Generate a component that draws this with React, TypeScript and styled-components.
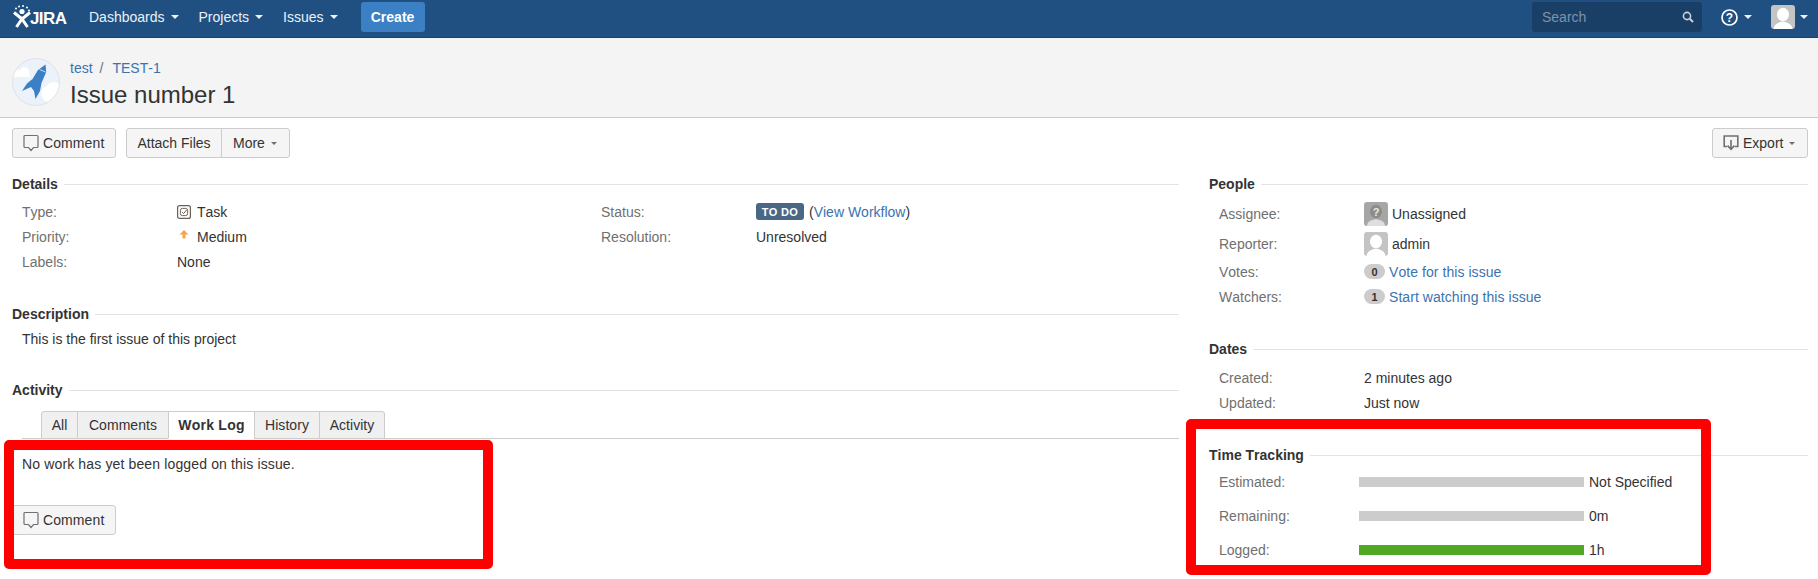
import React from "react";
import styled, { createGlobalStyle } from "styled-components";

const GlobalStyle = createGlobalStyle`
  html, body {
    margin: 0;
    height: 100%;
    overflow: hidden;
    background: #fff;
    font-family: "Liberation Sans", Arial, sans-serif;
    font-size: 14px;
    font-kerning: none;
    color: #333;
  }
  * { box-sizing: border-box; }
`;

const Page = styled.div`
  position: relative;
  width: 1818px;
  height: 579px;
  overflow: hidden;
`;

const Nav = styled.header`
  height: 38px;
  background: #205081;
  border-bottom: 1px solid #2e3d54;
  display: flex;
  align-items: center;
  padding: 0 10px 3px 13px;
  color: #fff;
`;

const LogoWrap = styled.div`
  display: flex;
  align-items: center;
  width: 76px;
`;

const LogoText = styled.span`
  font-size: 17px;
  font-weight: 700;
  letter-spacing: -0.6px;
  margin-left: -1px;
  padding-top: 3px;
`;

const NavItem = styled.a`
  display: flex;
  align-items: center;
  color: #ebf2f9;
  margin-right: 20px;
`;

const Caret = styled.i<{ $light?: boolean }>`
  display: inline-block;
  width: 0;
  height: 0;
  margin-left: 6px;
  border-left: 4px solid transparent;
  border-right: 4px solid transparent;
  border-top: 4px solid ${(p) => (p.$light ? "#ebf2f9" : "#707070")};
`;

const SmallCaret = styled(Caret)`
  border-left-width: 3px;
  border-right-width: 3px;
  border-top-width: 3px;
`;

const AvatarCaret = styled(Caret)`
  margin-left: 5px;
`;

const CreateButton = styled.a`
  width: 64px;
  height: 30px;
  margin-left: 3px;
  display: flex;
  align-items: center;
  justify-content: center;
  background: #3b7fc4;
  border-radius: 3px;
  color: #fff;
  font-weight: 700;
`;

const NavRight = styled.div`
  margin-left: auto;
  display: flex;
  align-items: center;
`;

const SearchBox = styled.div`
  width: 170px;
  height: 30px;
  margin-right: 19px;
  padding: 0 8px 0 10px;
  display: flex;
  align-items: center;
  justify-content: space-between;
  background: #1a3f66;
  border-radius: 3px;
  color: #7d93ab;
`;

const HelpWrap = styled.div`
  display: flex;
  align-items: center;
  width: 50px;
`;

const NavAvatar = styled.div`
  width: 24px;
  height: 24px;
  border-radius: 3px;
  overflow: hidden;
`;

const IssueHeader = styled.section`
  height: 80px;
  background: #f4f4f4;
  border-bottom: 1px solid #ccc;
  display: flex;
  padding: 20px 12px 0;
`;

const ProjectAvatar = styled.div`
  width: 48px;
  height: 48px;
  margin-right: 10px;
`;

const Crumbs = styled.div`
  display: flex;
  line-height: 20px;
  color: #707070;
`;

const Link = styled.a`
  color: #3b73af;
`;

const CrumbSep = styled.span`
  margin: 0 9px 0 7px;
`;

const Title = styled.h1`
  margin: 3px 0 0;
  font-size: 24px;
  font-weight: 400;
  line-height: 28px;
  color: #333;
`;

const Toolbar = styled.div`
  display: flex;
  justify-content: space-between;
  padding: 10px 10px 0 12px;
`;

const ToolGroup = styled.div`
  display: flex;
  gap: 10px;
`;

const JoinedGroup = styled.div`
  display: flex;
`;

const Button = styled.a`
  height: 30px;
  display: inline-flex;
  align-items: center;
  padding: 0 10px;
  gap: 4px;
  background: #f5f5f5;
  border: 1px solid #ccc;
  border-radius: 3.01px;
  color: #333;
`;

const CommentBtn = styled(Button)`
  width: 104px;
  letter-spacing: 0.1px;
`;

const JoinedLeft = styled(Button)`
  width: 96px;
  justify-content: center;
  border-radius: 3px 0 0 3px;
`;

const JoinedRight = styled(Button)`
  width: 69px;
  gap: 0;
  margin-left: -1px;
  padding-left: 11px;
  border-radius: 0 3px 3px 0;
`;

const ExportBtn = styled(Button)`
  width: 96px;
  gap: 4px;
  ${SmallCaret} {
    margin-left: 2px;
  }
`;

const Columns = styled.div`
  display: flex;
  padding: 0 10px 0 12px;
  gap: 30px;
`;

const MainCol = styled.main`
  width: 1167px;
`;

const SideCol = styled.aside`
  flex: 1;
`;

const Heading = styled.h4<{ $top: number }>`
  display: flex;
  align-items: center;
  gap: 6px;
  margin: ${(p) => p.$top}px 0 0;
  height: 20px;
  font-size: 14px;
  font-weight: 700;
  color: #333;
  &::after {
    content: "";
    flex: 1;
    height: 1px;
    background: #e3e3e3;
  }
`;

const DetailsGrid = styled.div`
  display: grid;
  grid-template-columns: 579px 1fr;
  padding-top: 5px;
`;

const Row = styled.div<{ $h?: number; $labelW?: number }>`
  display: grid;
  grid-template-columns: ${(p) => p.$labelW ?? 155}px 1fr;
  height: ${(p) => p.$h ?? 25}px;
  padding-left: 10px;
  align-items: center;
`;

const RowStack = styled.div<{ $top: number }>`
  padding-top: ${(p) => p.$top}px;
`;

const Label = styled.span`
  color: #707070;
`;

const Value = styled.span`
  display: flex;
  align-items: center;
  color: #333;
`;

const Lozenge = styled.span`
  width: 48px;
  height: 17px;
  margin-right: 5px;
  display: inline-flex;
  align-items: center;
  justify-content: center;
  background: #4a6785;
  border-radius: 3px;
  color: #fff;
  font-size: 11px;
  font-weight: 700;
  letter-spacing: 0.3px;
`;

const IconSlot = styled.span`
  display: inline-flex;
  width: 20px;
`;

const DescText = styled.p`
  margin: 5px 0 0 10px;
  line-height: 20px;
`;

const Tabs = styled.nav`
  display: flex;
  margin: 11px 0 0 10px;
  padding-left: 19px;
  height: 28px;
  border-bottom: 1px solid #ccc;
`;

const Tab = styled.a<{ $active?: boolean; $w: number }>`
  width: ${(p) => p.$w}px;
  height: 28px;
  display: flex;
  align-items: center;
  justify-content: center;
  background: ${(p) => (p.$active ? "#fff" : "#f0f0f0")};
  border: 1px solid #ccc;
  border-bottom: ${(p) => (p.$active ? "1px solid #fff" : "1px solid #ccc")};
  margin-left: -1px;
  font-weight: ${(p) => (p.$active ? 700 : 400)};
  letter-spacing: ${(p) => (p.$active ? "0.25px" : "0.05px")};
  color: #333;
  &:first-child {
    margin-left: 0;
    border-radius: 3px 0 0 0;
  }
  &:last-child {
    border-radius: 0 3px 0 0;
  }
`;

const EmptyLog = styled.p`
  margin: 15px 0 0 10px;
  line-height: 20px;
  letter-spacing: 0.14px;
`;

const FooterActions = styled.div`
  margin-top: 31px;
`;

const Avatar = styled.span`
  width: 24px;
  height: 24px;
  margin-right: 4px;
  border-radius: 3px;
  overflow: hidden;
  display: inline-flex;
`;

const Badge = styled.span`
  min-width: 21px;
  height: 15px;
  margin-right: 4px;
  display: inline-flex;
  align-items: center;
  justify-content: center;
  background: #ccc;
  border-radius: 8px;
  color: #333;
  font-size: 11px;
  font-weight: 700;
`;

const WatchLink = styled(Link)`
  letter-spacing: 0.06px;
`;

const TrackRow = styled.div`
  display: grid;
  grid-template-columns: 140px 225px 1fr;
  align-items: center;
  height: 34px;
  padding-left: 10px;
`;

const Bar = styled.div<{ $color: string }>`
  height: 10px;
  background: ${(p) => p.$color};
`;

const TrackValue = styled.span`
  padding-left: 5px;
  color: #333;
`;

const Annotation = styled.div<{ $l: number; $t: number; $w: number; $h: number }>`
  position: absolute;
  left: ${(p) => p.$l}px;
  top: ${(p) => p.$t}px;
  width: ${(p) => p.$w}px;
  height: ${(p) => p.$h}px;
  border: 10px solid #f00;
  border-radius: 5px;
  pointer-events: none;
`;

const CommentIcon = () => (
  <svg width="16" height="18" viewBox="0 0 16 18" fill="none">
    <path
      d="M2 1.5h12a1 1 0 0 1 1 1v10a1 1 0 0 1-1 1h-3.5L8 16.5 5.5 13.5H2a1 1 0 0 1-1-1v-10a1 1 0 0 1 1-1z"
      stroke="#707070"
      strokeWidth="1.2"
    />
  </svg>
);

const ExportIcon = () => (
  <svg width="16" height="18" viewBox="0 0 16 18" fill="none">
    <path d="M4 12.5H1.2V2h13.6v10.5H12" stroke="#707070" strokeWidth="1.6" />
    <path d="M8 6v9M4.6 11.6 8 15.4l3.4-3.8" stroke="#707070" strokeWidth="1.6" />
  </svg>
);

const PersonAvatar = ({ unknown }: { unknown?: boolean }) => (
  <svg width="24" height="24" viewBox="0 0 24 24">
    <rect width="24" height="24" fill={unknown ? "#a6a6a6" : "#c4c4c4"} />
    <ellipse cx="12" cy="9.5" rx="6" ry="6.8" fill={unknown ? "#8c8c8c" : "#fff"} />
    <path
      d={unknown ? "M3 24c0-4.5 4-6 9-7 5 1 9 2.5 9 7z" : "M2.5 24c.5-4.5 4-6.5 9.5-7.5 5.5 1 9 3 9.5 7.5z"}
      fill={unknown ? "#dedede" : "#fff"}
    />
    {unknown && (
      <text x="12" y="13.5" textAnchor="middle" fontSize="11" fontWeight="700" fill="#e8e8e8" fontFamily="Liberation Sans">
        ?
      </text>
    )}
  </svg>
);

export default function App() {
  return (
    <Page>
      <GlobalStyle />
      <Nav>
        <LogoWrap>
          <svg width="18" height="24" viewBox="0 0 18 24">
            <circle cx="9" cy="6.5" r="2.6" fill="#fff" />
            <g fill="#fff">
              <circle cx="3" cy="3.5" r="1" />
              <circle cx="6" cy="1.5" r="1" />
              <circle cx="10" cy="1" r="1" />
              <circle cx="14" cy="2.5" r="1" />
              <circle cx="16" cy="5.5" r="1" />
            </g>
            <path d="M1 7.5 9 14l8-6.5M3.5 22 9 14l5.5 8" stroke="#fff" strokeWidth="3" fill="none" />
          </svg>
          <LogoText>JIRA</LogoText>
        </LogoWrap>
        <NavItem>Dashboards<Caret $light /></NavItem>
        <NavItem>Projects<Caret $light /></NavItem>
        <NavItem>Issues<Caret $light /></NavItem>
        <CreateButton>Create</CreateButton>
        <NavRight>
          <SearchBox>
            Search
            <svg width="12" height="12" viewBox="0 0 12 12" fill="none">
              <circle cx="5" cy="5" r="3.6" stroke="#c4d0dc" strokeWidth="1.6" />
              <path d="M7.8 7.8 11 11" stroke="#c4d0dc" strokeWidth="2" />
            </svg>
          </SearchBox>
          <HelpWrap>
            <svg width="17" height="17" viewBox="0 0 17 17" fill="none">
              <circle cx="8.5" cy="8.5" r="7.5" stroke="#fff" strokeWidth="1.7" />
              <text x="8.5" y="13" textAnchor="middle" fontSize="12" fontWeight="700" fill="#fff" fontFamily="Liberation Sans">
                ?
              </text>
            </svg>
            <Caret $light />
          </HelpWrap>
          <NavAvatar><PersonAvatar /></NavAvatar>
          <AvatarCaret $light />
        </NavRight>
      </Nav>

      <IssueHeader>
        <ProjectAvatar>
          <svg width="48" height="48" viewBox="0 0 48 48">
            <defs>
              <clipPath id="avatarClip">
                <circle cx="24" cy="24" r="23" />
              </clipPath>
            </defs>
            <circle cx="24" cy="24" r="23.5" fill="#ebf2f9" stroke="#dde3ea" />
            <g clipPath="url(#avatarClip)" fill="#fff">
              <path d="M0 19c1-6 5-9 8-7 2-4 7-4 9 0l1 7z" />
              <path d="M30 38c-2-5 1-9 4-9 2-5 9-6 14-3v18H36c-3 0-5-3-6-6z" />
            </g>
            <path
              d="M33.5 6.5 34.2 14 29.5 25 28 33 23.5 41 22 33 19 29 10 33 15 25.5 20.5 21 26 12z"
              fill="#3b7fc4"
            />
            <path d="M27.5 11.5 33.5 14" stroke="#ebf2f9" strokeWidth="0.8" />
          </svg>
        </ProjectAvatar>
        <div>
          <Crumbs>
            <Link>test</Link>
            <CrumbSep>/</CrumbSep>
            <Link>TEST-1</Link>
          </Crumbs>
          <Title>Issue number 1</Title>
        </div>
      </IssueHeader>

      <Toolbar>
        <ToolGroup>
          <CommentBtn><CommentIcon />Comment</CommentBtn>
          <JoinedGroup>
            <JoinedLeft>Attach Files</JoinedLeft>
            <JoinedRight>More<SmallCaret /></JoinedRight>
          </JoinedGroup>
        </ToolGroup>
        <ExportBtn><ExportIcon />Export<SmallCaret /></ExportBtn>
      </Toolbar>

      <Columns>
        <MainCol>
          <Heading $top={16}>Details</Heading>
          <DetailsGrid>
            <div>
              <Row>
                <Label>Type:</Label>
                <Value>
                  <IconSlot>
                    <svg width="14" height="14" viewBox="0 0 14 14" fill="none">
                      <rect x="0.6" y="0.6" width="12.8" height="12.8" rx="2" stroke="#6b6257" strokeWidth="1.2" />
                      <rect x="3.4" y="3.4" width="7.2" height="7.2" rx="2" stroke="#6b6257" />
                      <path d="m5 7 1.6 1.6L9.6 5" stroke="#6b6257" />
                    </svg>
                  </IconSlot>
                  Task
                </Value>
              </Row>
              <Row>
                <Label>Priority:</Label>
                <Value>
                  <IconSlot>
                    <svg width="14" height="14" viewBox="0 0 14 14">
                      <path d="M7 0 11.5 4.5H8.5V8.5H5.5V4.5H2.5z" fill="#f79232" opacity="0.85" />
                    </svg>
                  </IconSlot>
                  Medium
                </Value>
              </Row>
              <Row>
                <Label>Labels:</Label>
                <Value>None</Value>
              </Row>
            </div>
            <div>
              <Row>
                <Label>Status:</Label>
                <Value>
                  <Lozenge>TO DO</Lozenge>
                  <span>(<Link>View Workflow</Link>)</span>
                </Value>
              </Row>
              <Row>
                <Label>Resolution:</Label>
                <Value>Unresolved</Value>
              </Row>
            </div>
          </DetailsGrid>

          <Heading $top={30}>Description</Heading>
          <DescText>This is the first issue of this project</DescText>

          <Heading $top={31}>Activity</Heading>
          <Tabs>
            <Tab $w={37}>All</Tab>
            <Tab $w={92}>Comments</Tab>
            <Tab $w={87} $active>Work Log</Tab>
            <Tab $w={66}>History</Tab>
            <Tab $w={66}>Activity</Tab>
          </Tabs>
          <EmptyLog>No work has yet been logged on this issue.</EmptyLog>
          <FooterActions>
            <CommentBtn><CommentIcon />Comment</CommentBtn>
          </FooterActions>
        </MainCol>

        <SideCol>
          <Heading $top={16}>People</Heading>
          <RowStack $top={5}>
            <Row $h={30} $labelW={145}>
              <Label>Assignee:</Label>
              <Value><Avatar><PersonAvatar unknown /></Avatar>Unassigned</Value>
            </Row>
            <Row $h={30} $labelW={145}>
              <Label>Reporter:</Label>
              <Value><Avatar><PersonAvatar /></Avatar>admin</Value>
            </Row>
            <Row $labelW={145}>
              <Label>Votes:</Label>
              <Value><Badge>0</Badge><WatchLink>Vote for this issue</WatchLink></Value>
            </Row>
            <Row $labelW={145}>
              <Label>Watchers:</Label>
              <Value><Badge>1</Badge><WatchLink>Start watching this issue</WatchLink></Value>
            </Row>
          </RowStack>

          <Heading $top={30}>Dates</Heading>
          <RowStack $top={6}>
            <Row $labelW={145}>
              <Label>Created:</Label>
              <Value>2 minutes ago</Value>
            </Row>
            <Row $labelW={145}>
              <Label>Updated:</Label>
              <Value>Just now</Value>
            </Row>
          </RowStack>

          <Heading $top={30}>Time Tracking</Heading>
          <TrackRow>
            <Label>Estimated:</Label>
            <Bar $color="#ccc" />
            <TrackValue>Not Specified</TrackValue>
          </TrackRow>
          <TrackRow>
            <Label>Remaining:</Label>
            <Bar $color="#ccc" />
            <TrackValue>0m</TrackValue>
          </TrackRow>
          <TrackRow>
            <Label>Logged:</Label>
            <Bar $color="#51a825" />
            <TrackValue>1h</TrackValue>
          </TrackRow>
        </SideCol>
      </Columns>

      <Annotation $l={4} $t={440} $w={489} $h={129} />
      <Annotation $l={1186} $t={419} $w={525} $h={156} />
    </Page>
  );
}
